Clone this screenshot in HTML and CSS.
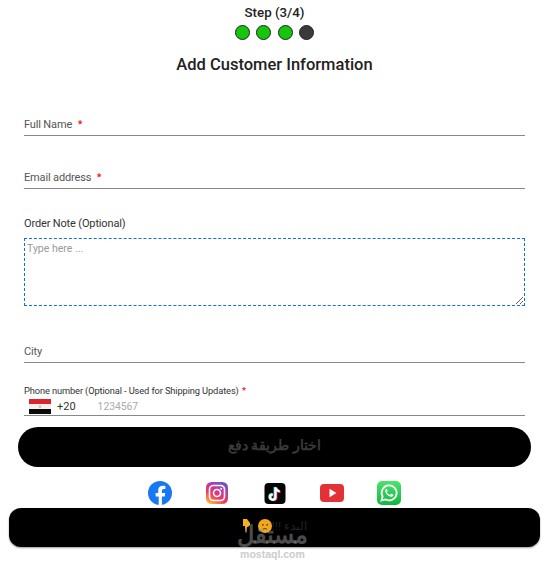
FILE: index.html
```html
<!DOCTYPE html>
<html lang="en">
<head>
    <meta charset="UTF-8">
    <meta name="viewport" content="width=device-width, initial-scale=1.0">
    <title>Add Customer Information</title>
    <link rel="stylesheet" href="styles.css">
</head>
<body>
    <div class="page">
        <div class="step-title">Step (3/4)</div>
        <div class="steps">
            <span class="dot done"></span>
            <span class="dot done"></span>
            <span class="dot done"></span>
            <span class="dot"></span>
        </div>
        <h1 class="heading">Add Customer Information</h1>

        <form class="form">
            <div class="field field-name">
                <label>Full Name <span class="req">*</span></label>
            </div>
            <div class="field field-email">
                <label>Email address <span class="req">*</span></label>
            </div>
            <label class="note-label">Order Note (Optional)</label>
            <textarea class="note" placeholder="Type here ..."></textarea>
            <div class="field field-city">
                <label>City</label>
            </div>
            <label class="phone-label">Phone number (Optional - Used for Shipping Updates) <span class="req">*</span></label>
            <div class="phone-row">
                <svg class="flag" width="22" height="15" viewBox="0 0 22 15">
                    <rect width="22" height="5" fill="#d8262c"/>
                    <rect y="5" width="22" height="5" fill="#f4f0ee"/>
                    <rect y="10" width="22" height="5" fill="#0c0c0c"/>
                    <rect x="10" y="6" width="2" height="3" fill="#d8c8a8"/>
                </svg>
                <span class="code">+20</span>
                <input class="phone-input" placeholder="1234567">
            </div>
        </form>

        <button class="pay-btn" type="button" dir="rtl">اختار طريقة دفع</button>

        <div class="socials">
            <svg width="24" height="24" viewBox="0 0 24 24">
                <circle cx="12" cy="12" r="12" fill="#1877f2"/>
                <path fill="#fff" d="M16.7 15.5l.5-3.5h-3.3V9.800c0-1 .5-1.900 2-1.900h1.500V5c0 0-1.400-.2-2.700-.2-2.700 0-4.500 1.600-4.500 4.600V12H7.600v3.500h3.100V24h3.200v-8.500z"/>
            </svg>
            <svg width="24" height="24" viewBox="0 0 24 24">
                <defs>
                    <linearGradient id="ig" x1="0.2" y1="1" x2="0.8" y2="0">
                        <stop offset="0" stop-color="#fdb73b"/>
                        <stop offset="0.35" stop-color="#ee3a5e"/>
                        <stop offset="0.7" stop-color="#b93aa8"/>
                        <stop offset="1" stop-color="#5b5bd0"/>
                    </linearGradient>
                </defs>
                <rect x="1" y="1" width="22" height="22" rx="5.500" fill="url(#ig)"/>
                <rect x="4.500" y="4.500" width="15" height="15" rx="4" fill="none" stroke="#fff" stroke-width="1.600"/>
                <circle cx="12" cy="12" r="3.500" fill="none" stroke="#fff" stroke-width="1.600"/>
                <circle cx="16.200" cy="7.800" r="1" fill="#fff"/>
            </svg>
            <svg width="24" height="24" viewBox="0 0 24 24">
                <rect x="1.500" y="2" width="21" height="21" rx="4" fill="#050505"/>
                <path fill="none" stroke="#25f4ee" stroke-width="2.200" d="M11.700 6v9.700a2.700 2.700 0 1 1-2.700-2.700M11.700 6c.4 2.400 2 3.800 4.200 4"/>
                <path fill="none" stroke="#fe2c55" stroke-width="2.200" d="M13.300 6.800v9.700a2.700 2.700 0 1 1-2.700-2.700M13.300 6.800c.4 2.400 2 3.800 4.200 4"/>
                <path fill="none" stroke="#fff" stroke-width="2.200" d="M12.500 6.400v9.700a2.700 2.700 0 1 1-2.700-2.700M12.500 6.400c.4 2.400 2 3.800 4.200 4"/>
            </svg>
            <svg width="24" height="24" viewBox="0 0 24 24">
                <rect y="3" width="24" height="18" rx="4" fill="#e23237"/>
                <path fill="#fff" d="M9.500 7.800v8.400l7-4.200z"/>
            </svg>
            <svg width="24" height="24" viewBox="0 0 24 24">
                <defs>
                    <linearGradient id="wa" x1="0" y1="0" x2="0" y2="1">
                        <stop offset="0" stop-color="#4be36f"/>
                        <stop offset="1" stop-color="#0eb83e"/>
                    </linearGradient>
                </defs>
                <rect width="24" height="24" rx="5" fill="url(#wa)"/>
                <path fill="none" stroke="#fff" stroke-width="1.800" d="M4.500 19.500l1.100-4a7.500 7.500 0 1 1 2.900 2.900z"/>
                <path fill="#fff" d="M9.500 7.800c-.4 0-1.300.7-1.300 2 0 2.600 3.300 6 6.200 6 1.300 0 2-1 2-1.500 0-.3 0-.6-.2-.7l-1.800-.9c-.3-.1-.5 0-.7.300l-.5.700c-.2.200-.4.200-.6.100-1.200-.5-2-1.300-2.600-2.400-.1-.2 0-.4.100-.5l.5-.7c.1-.2.100-.3 0-.5l-.7-1.700c-.1-.2-.3-.2-.4-.2z"/>
            </svg>
        </div>

        <div class="start-bar">
            <svg class="hand" width="9" height="14" viewBox="0 0 9 14">
                <path fill="#f5b01e" d="M1 0h4l3 4v2l-2 2H5l-.5 5.500h-1L3 7H1z"/>
            </svg>
            <svg class="face" width="14" height="14" viewBox="0 0 14 14">
                <circle cx="7" cy="7" r="7" fill="#f2a71c"/>
                <circle cx="4.800" cy="5.800" r="0.900" fill="#5a3a10"/>
                <circle cx="9.200" cy="5.800" r="0.900" fill="#5a3a10"/>
                <path fill="none" stroke="#5a3a10" d="M4.800 10.300c1.300-1 3-1 4.400 0"/>
            </svg>
            <span class="start-text" dir="rtl">البدء !!!</span>
        </div>

        <div class="watermark">
            <div class="wm-logo" dir="rtl">مستقل</div>
            <div class="wm-site">mostaql.com</div>
        </div>
    </div>
</body>
</html>
```
FILE: styles.css
```css
* {
    margin: 0;
    padding: 0;
    box-sizing: border-box;
}

body {
    background-color: #fff;
    font-family: Roboto, "Noto Sans", sans-serif;
    color: #222;
}

.page {
    position: relative;
    height: 571px;
    overflow: hidden;
}

.step-title {
    padding: 5px 0 0 4px;
    font-size: 13.300px;
    font-weight: 500;
    line-height: 16px;
    text-align: center;
}

.steps {
    display: flex;
    justify-content: center;
    gap: 6.500px;
    margin-top: 4px;
    padding-left: 4px;
}

.dot {
    width: 15px;
    height: 15px;
    border: 1px solid #222;
    border-radius: 50%;
    background-color: #3a3a3a;
}

.dot.done {
    background-color: #16c60c;
}

.heading {
    margin-top: 13px;
    padding-left: 4px;
    font-size: 16.500px;
    font-weight: 500;
    line-height: 24px;
    text-align: center;
}

.form {
    display: flex;
    flex-direction: column;
    padding: 0 20px 0 24px;
}

.field {
    padding-bottom: 2px;
    border-bottom: 1px solid #888;
    font-size: 11px;
    letter-spacing: -.15px;
    line-height: 16px;
    color: #555;
}

.field-name {
    margin-top: 40px;
}

.field-email {
    margin-top: 34px;
}

.field-city {
    margin-top: 38px;
}

.req {
    margin-left: 3px;
    color: #e00;
}

.note-label {
    margin-top: 27px;
    font-size: 11px;
    letter-spacing: -.15px;
    line-height: 16px;
    color: #333;
}

.note {
    display: block;
    height: 68px;
    margin-top: 6px;
    padding: 3px 2px;
    border: 1px dashed #0a74da;
    outline: none;
    font-family: Roboto, sans-serif;
    font-size: 10.500px;
}

.note::placeholder {
    color: #999;
}

.phone-label {
    margin-top: 22px;
    font-size: 9.300px;
    letter-spacing: -.12px;
    line-height: 12px;
    color: #333;
}

.phone-label .req {
    margin-left: 1px;
}

.phone-row {
    display: flex;
    align-items: center;
    height: 19px;
    padding-left: 5px;
    border-bottom: 1px solid #888;
}

.code {
    margin-left: 6px;
    font-size: 11px;
    color: #333;
}

.phone-input {
    width: 120px;
    margin-left: 22px;
    border: none;
    outline: none;
    font-family: Roboto, sans-serif;
    font-size: 10.300px;
}

.phone-input::placeholder {
    color: #aaa;
}

.pay-btn {
    display: block;
    width: 513px;
    height: 40px;
    margin: 11px 0 0 18px;
    padding-bottom: 4px;
    border: none;
    border-radius: 20px;
    background-color: #000;
    font-family: "Liberation Sans", sans-serif;
    font-size: 14px;
    font-weight: bold;
    color: #3a3a3a;
}

.socials {
    display: flex;
    justify-content: center;
    gap: 33.250px;
    margin-top: 14px;
    padding-left: 4px;
}

.socials svg {
    display: block;
}

.start-bar {
    display: flex;
    align-items: center;
    justify-content: center;
    width: 531px;
    height: 39px;
    margin: 3px 0 0 9px;
    border-radius: 12px;
    background-color: #000;
    box-shadow: 0 1px 2px rgba(0, 0, 0, .4);
}

.start-bar svg {
    margin-bottom: 3px;
}

.hand {
    margin-right: 7px;
}

.start-text {
    margin-bottom: 3px;
    font-family: "Liberation Sans", sans-serif;
    font-size: 11.500px;
    color: #222;
}

.watermark {
    position: absolute;
    left: 220px;
    top: 521px;
    width: 105px;
    text-align: center;
    pointer-events: none;
}

.wm-logo {
    font-family: "Liberation Sans", sans-serif;
    font-size: 24px;
    font-weight: bold;
    line-height: 28px;
    color: rgba(150, 150, 150, .5);
}

.wm-site {
    font-family: "Liberation Sans", sans-serif;
    font-size: 10.500px;
    font-weight: bold;
    line-height: 11px;
    color: #ccc;
}
```
